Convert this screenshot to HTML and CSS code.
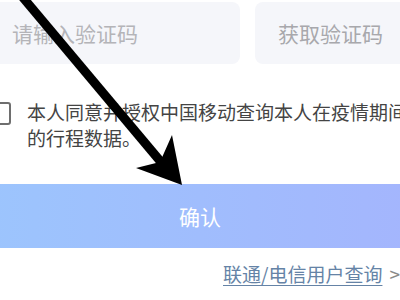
FILE: index.html
```html
<!DOCTYPE html>
<html lang="zh-CN">
<head>
    <meta charset="UTF-8">
    <meta name="viewport" content="width=device-width, initial-scale=1.0">
    <title>验证码查询</title>
    <link rel="stylesheet" href="styles.css">
</head>
<body>
    <div class="page">
        <div class="code-row">
            <div class="code-input">请输入验证码</div>
            <div class="code-btn">获取验证码</div>
        </div>

        <div class="agree">
            <span class="check"></span>
            <p>本人同意并授权中国移动查询本人在疫情期间的行程数据。</p>
        </div>

        <div class="confirm">确认</div>

        <div class="other">
            <a href="#">联通/电信用户查询</a>
            <span class="chev">&gt;</span>
        </div>
    </div>

    <!-- hand drawn pointer over the page -->
    <svg class="arrow" width="400" height="300" viewBox="0 0 400 300">
        <line x1="20" y1="-6" x2="166" y2="168" stroke="#000" stroke-width="9"/>
        <polygon points="182,185 136,168 160,162 172,135" fill="#000"/>
    </svg>
</body>
</html>
```

FILE: styles.css
```css
body {
    margin: 0;
    background: #fff;
    overflow: hidden;
    font-family: "Noto Sans CJK SC", "Noto Sans", sans-serif;
}

.page {
    width: 440px;
    margin: 0 -20px;
}

.code-row {
    display: flex;
    gap: 15px;
    margin-top: 2px;
}

.code-input,
.code-btn {
    height: 62px;
    background: #f5f6fa;
    border-radius: 8px;
    display: flex;
    align-items: center;
    font-size: 21px;
    color: #b4b4b8;
}

.code-input {
    width: 228px;
    padding-left: 32px;
}

.code-btn {
    flex: 1;
    padding-left: 23px;
    color: #a8a8ac;
}

.agree {
    display: flex;
    align-items: flex-start;
    gap: 16px;
    margin-top: 35px;
    padding-left: 9px;
}

.check {
    flex: none;
    width: 18px;
    height: 19px;
    margin-top: 3px;
    border: 2px solid #6e6e6e;
    border-radius: 3px;
}

.agree p {
    margin: 0;
    width: 420px;
    font-size: 19px;
    line-height: 26px;
    color: #444;
}

.confirm {
    height: 64px;
    margin-top: 33px;
    background: linear-gradient(90deg, #9cc5fd, #a4b5fd);
    color: #fff;
    font-size: 21px;
    display: flex;
    align-items: center;
    justify-content: center;
}

.other {
    display: flex;
    justify-content: flex-end;
    align-items: center;
    gap: 7px;
    margin-top: 13px;
    padding-right: 20px;
    font-size: 19px;
    line-height: 26px;
}

.other a {
    color: #6583a6;
    text-decoration: underline;
    text-underline-offset: 3px;
}

.chev {
    color: #8a8a8a;
    font-size: 19px;
}

.arrow {
    position: absolute;
    left: 0;
    top: 0;
    pointer-events: none;
}
```
